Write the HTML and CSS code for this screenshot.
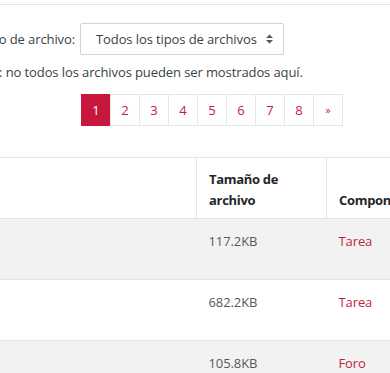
FILE: index.html
```html
<!DOCTYPE html>
<html lang="es">
<head>
  <meta charset="UTF-8" />
  <title>Archivos del curso</title>
  <link rel="stylesheet" href="styles.css">
</head>
<body>

  <div class="page">
    <div class="filter">
      <label for="filetype">Tipo de archivo:</label>
      <div class="select" id="filetype">
        <span>Todos los tipos de archivos</span>
        <svg class="caret" width="7" height="10" viewBox="0 0 7 10">
          <path d="M3.5 0.5 L7 4 H0 Z M0 6 H7 L3.5 9.5 Z" fill="#555"/>
        </svg>
      </div>
    </div>

    <p class="note">Nota: no todos los archivos pueden ser mostrados aquí.</p>

    <ul class="pager">
      <li class="active"><a href="#">1</a></li>
      <li><a href="#">2</a></li>
      <li><a href="#">3</a></li>
      <li><a href="#">4</a></li>
      <li><a href="#">5</a></li>
      <li><a href="#">6</a></li>
      <li><a href="#">7</a></li>
      <li><a href="#">8</a></li>
      <li><a href="#" class="next">»</a></li>
    </ul>

    <table class="files">
      <thead>
        <tr>
          <th class="col-name"></th>
          <th class="col-size">Tamaño de archivo</th>
          <th class="col-comp">Componente</th>
        </tr>
      </thead>
      <tbody>
        <tr class="odd">
          <td></td>
          <td>117.2KB</td>
          <td><a href="#">Tarea</a></td>
        </tr>
        <tr>
          <td></td>
          <td>682.2KB</td>
          <td><a href="#">Tarea</a></td>
        </tr>
        <tr class="odd">
          <td></td>
          <td>105.8KB</td>
          <td><a href="#">Foro</a></td>
        </tr>
      </tbody>
    </table>
  </div>

</body>
</html>
```

FILE: styles.css
```css
body {
  margin: 0;
  font-family: "Open Sans", "Noto Sans", sans-serif;
  font-size: 13px;
  letter-spacing: -0.1px;
  color: #3b3f43;
  background: #fff;
  overflow: hidden;
}

.page {
  border-top: 1px solid #e3e5e7;
  margin-top: 4px;
}

/* filter row, label is cut by the left edge */
.filter {
  display: flex;
  align-items: center;
  margin: 18px 0 0 -45px;
}

.filter label {
  width: 120px;
  text-align: right;
  white-space: nowrap;
  margin-right: 5px;
}

.select {
  display: flex;
  align-items: center;
  justify-content: space-between;
  height: 30px;
  width: 177px;
  padding: 0 10px 0 15px;
  border: 1px solid #ced4da;
  border-radius: 2px;
  white-space: nowrap;
}

.note {
  margin: 7px 0 0 -30px;
  line-height: 20px;
  white-space: nowrap;
}

.pager {
  display: flex;
  list-style: none;
  padding: 0;
  margin: 12px 0 0 81px;
}

.pager li a {
  display: block;
  width: 28px;
  height: 30px;
  line-height: 30px;
  text-align: center;
  color: #c21d43;
  text-decoration: none;
  border: 1px solid #e3e5e7;
  margin-left: -1px;
}

.pager li:first-child a {
  margin-left: 0;
}

.pager li.active a {
  background: #c8173d;
  border-color: #c8173d;
  color: #fff;
}

.pager .next {
  font-size: 10px;
}

.files {
  border-collapse: collapse;
  margin-top: 31px;
  width: 560px;
  margin-left: -60px;
}

.files thead tr {
  height: 61px;
}

.files th {
  text-align: left;
  vertical-align: bottom;
  font-weight: bold;
  letter-spacing: -0.3px;
  color: #23262a;
  line-height: 21px;
  padding: 4px 12px 7px;
  border-top: 1px solid #e3e5e7;
  border-bottom: 1px solid #e3e5e7;
  border-left: 1px solid #e3e5e7;
}

.files th:first-child {
  border-left: none;
}

.col-name { width: 232px; }
.col-size { width: 105px; }

.files tbody tr {
  height: 61px;
}

.files td {
  vertical-align: top;
  padding: 12px;
  border-bottom: 1px solid #e3e5e7;
  color: #55595d;
  line-height: 20px;
}

.files tr.odd td {
  background: #f2f2f2;
}

.files a {
  color: #c21d43;
  text-decoration: none;
}
```
